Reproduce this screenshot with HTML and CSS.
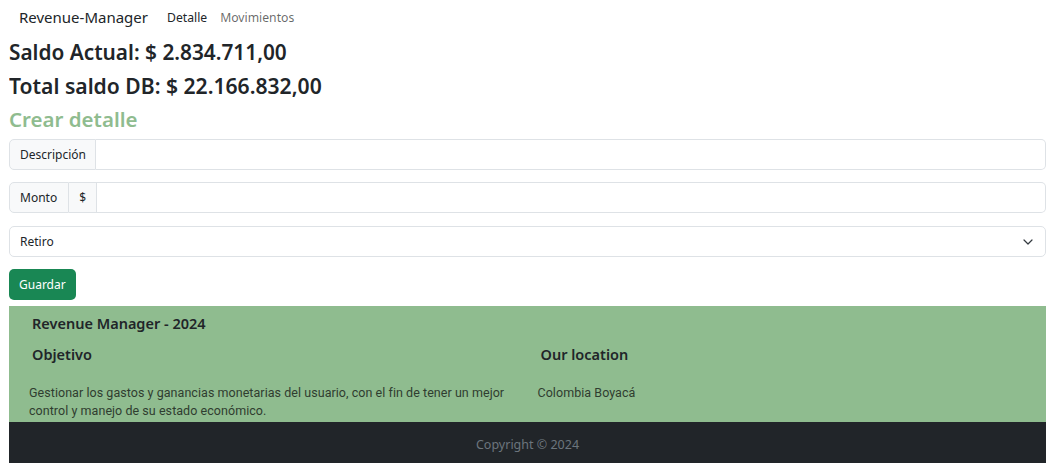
FILE: index.html
```html
<!DOCTYPE html>
<html lang="es">
<head>
<meta charset="utf-8">
<title>Revenue-Manager</title>
<link rel="stylesheet" href="styles.css">
</head>
<body>
<nav class="navbar">
  <span class="brand">Revenue-Manager</span>
  <a class="nav-link active">Detalle</a>
  <a class="nav-link">Movimientos</a>
</nav>
<main class="content">
  <h2 class="saldo">Saldo Actual: $ 2.834.711,00</h2>
  <h2 class="saldo">Total saldo DB: $ 22.166.832,00</h2>
  <h3 class="crear">Crear detalle</h3>
  <form class="form">
    <div class="input-group">
      <span class="addon">Descripción</span>
      <input class="field" type="text">
    </div>
    <div class="input-group">
      <span class="addon addon-monto">Monto</span>
      <span class="addon addon-mid">$</span>
      <input class="field" type="text">
    </div>
    <div class="select">
      <span>Retiro</span>
      <svg class="chev" width="10" height="6" viewBox="0 0 10 6"><path d="M1 1 5 5 9 1" fill="none" stroke="#343a40" stroke-width="1.2" stroke-linecap="round" stroke-linejoin="round"/></svg>
    </div>
    <div><button class="btn" type="button">Guardar</button></div>
  </form>
</main>
<footer class="footer">
  <div class="footer-top">
    <h4 class="f-title">Revenue Manager - 2024</h4>
    <div class="cols">
      <div class="col col-left">
        <h5 class="f-head">Objetivo</h5>
        <p class="f-text">Gestionar los gastos y ganancias monetarias del usuario, con el fin de tener un mejor control y manejo de su estado económico.</p>
      </div>
      <div class="col col-right">
        <h5 class="f-head">Our location</h5>
        <p class="f-text">Colombia Boyacá</p>
      </div>
    </div>
  </div>
  <div class="copy">Copyright © 2024</div>
</footer>
</body>
</html>
```
FILE: styles.css
```css
* { box-sizing: border-box; }
body {
  margin: 0 10px 0 9px;
  font-family: "Noto Sans", "Open Sans", sans-serif;
  color: #212529;
  background: #fff;
}
.navbar {
  display: flex;
  align-items: center;
  height: 34px;
  padding-left: 10px;
}
.brand {
  font-size: 15px;
  color: #212529;
  margin-right: 19px;
}
.nav-link {
  font-size: 12.2px;
  color: rgba(0,0,0,.6);
  margin-right: 13px;
}
.nav-link.active { color: #212529; }
.content { display: flex; flex-direction: column; padding-top: 2px; }
.saldo {
  margin: 0;
  font-size: 20.8px;
  font-weight: 600;
  line-height: 33px;
}
.saldo + .saldo { font-size: 21.1px; }
.crear {
  margin: 0;
  font-size: 20.5px;
  font-weight: 600;
  line-height: 34px;
  color: #8fbc8f;
}
.form {
  display: flex;
  flex-direction: column;
  gap: 12px;
  margin-top: 3px;
}
.input-group {
  display: flex;
  height: 31px;
}
.addon {
  display: flex;
  align-items: center;
  padding: 0 9px 0 10px;
  font-size: 12px;
  background: #f8f9fa;
  border: 1px solid #dee2e6;
  border-radius: 5px 0 0 5px;
}
.addon-monto { padding-right: 11px; }
.addon-mid {
  border-radius: 0;
  border-left: 0;
  padding: 0 10px 0 10px;
}
.field {
  flex: 1;
  border: 1px solid #dee2e6;
  border-left: 0;
  border-radius: 0 5px 5px 0;
  font: inherit;
  outline: none;
}
.select {
  display: flex;
  align-items: center;
  justify-content: space-between;
  height: 31px;
  margin-top: 1px;
  border: 1px solid #dee2e6;
  border-radius: 5px;
  padding: 0 12px 0 10px;
  font-size: 12px;
}
.chev { display: block; }
.btn {
  height: 31px;
  padding: 0 10px;
  border: 0;
  border-radius: 5px;
  background: #198754;
  color: #fff;
  font: inherit;
  font-size: 12px;
}
.footer { margin-top: 6px; }
.footer-top {
  background: #8fbc8f;
  padding: 7px 0 0 0;
  height: 116px;
}
.f-title {
  margin: 0 0 0 23px;
  font-size: 14.5px;
  font-weight: 600;
  line-height: 20px;
}
.cols {
  display: grid;
  grid-template-columns: 1fr 1fr;
  margin-top: 11px;
}
.col-left { padding-left: 20px; }
.col-right { padding-left: 10px; }
.f-head {
  margin: 0 0 0 3px;
  font-size: 14.5px;
  font-weight: 600;
  line-height: 20px;
}
.f-text {
  margin: 20px 0 0 0;
  font-family: "Roboto", sans-serif;
  font-size: 12.5px;
  line-height: 18px;
  letter-spacing: 0.05px;
  color: #2f3d30;
}
.copy {
  background: #212529;
  height: 41px;
  display: flex;
  align-items: center;
  justify-content: center;
  padding-top: 3px;
  font-size: 12.5px;
  color: #6c757d;
}
```
